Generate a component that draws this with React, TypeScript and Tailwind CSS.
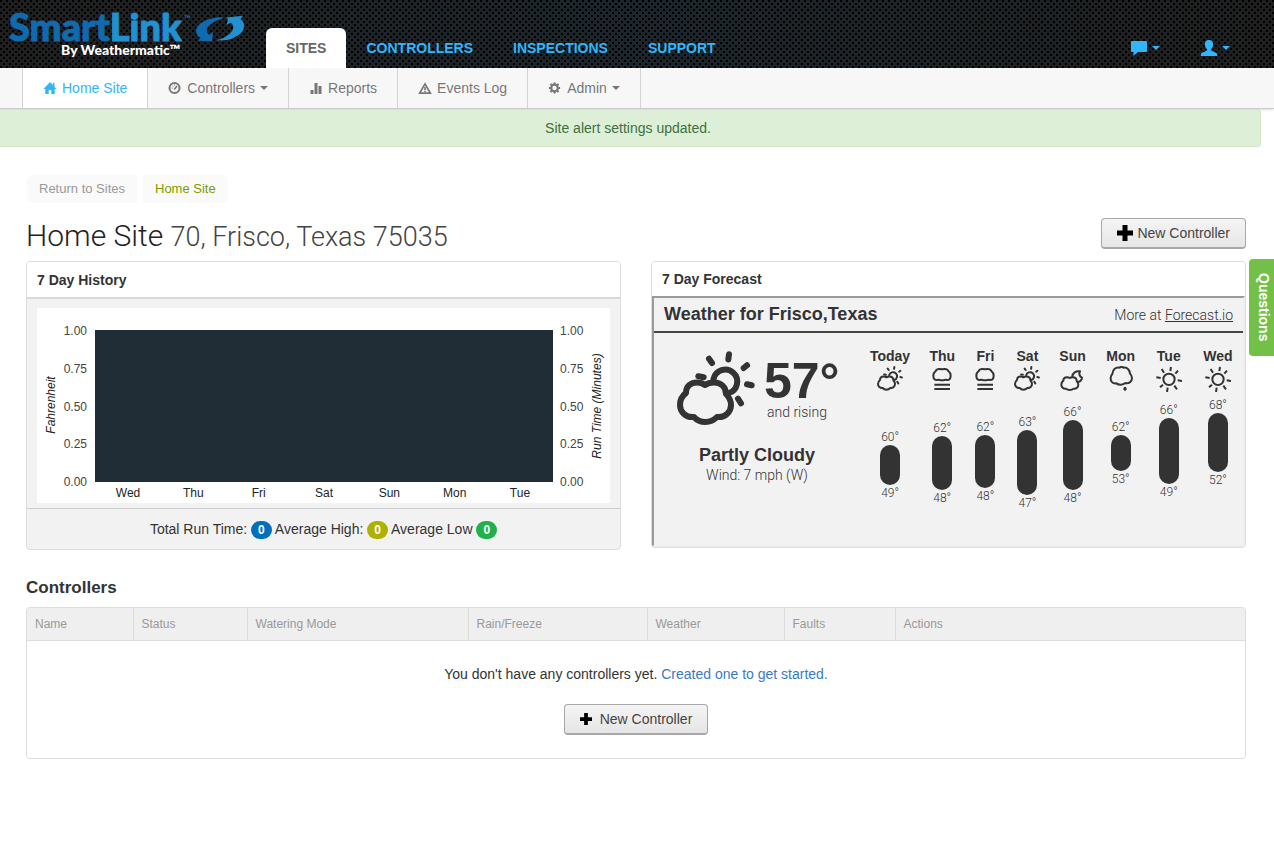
import { ReactNode } from "react";

type WeatherKind = "partly" | "fog" | "night" | "rain" | "clear";

interface ForecastDay {
  day: string;
  kind: WeatherKind;
  high: number;
  low: number;
  top: number;
  height: number;
}

const forecast: ForecastDay[] = [
  { day: "Today", kind: "partly", high: 60, low: 49, top: 32, height: 40 },
  { day: "Thu", kind: "fog", high: 62, low: 48, top: 23, height: 54 },
  { day: "Fri", kind: "fog", high: 62, low: 48, top: 22, height: 53 },
  { day: "Sat", kind: "partly", high: 63, low: 47, top: 17, height: 65 },
  { day: "Sun", kind: "night", high: 66, low: 48, top: 7, height: 70 },
  { day: "Mon", kind: "rain", high: 62, low: 53, top: 22, height: 36 },
  { day: "Tue", kind: "clear", high: 66, low: 49, top: 5, height: 66 },
  { day: "Wed", kind: "clear", high: 68, low: 52, top: 0, height: 59 },
];

const historyDays = ["Wed", "Thu", "Fri", "Sat", "Sun", "Mon", "Tue"];
const ticks = ["1.00", "0.75", "0.50", "0.25", "0.00"];

const columns = [
  { label: "Name", width: "w-[106px]" },
  { label: "Status", width: "w-[114px]" },
  { label: "Watering Mode", width: "w-[221px]" },
  { label: "Rain/Freeze", width: "w-[179px]" },
  { label: "Weather", width: "w-[137px]" },
  { label: "Faults", width: "w-[111px]" },
  { label: "Actions", width: "" },
];

function Logo() {
  return (
    <svg viewBox="0 0 246 68" className="h-[68px] w-[246px]" role="img" aria-label="SmartLink By Weathermatic">
      <g fontFamily="Lato, sans-serif" fontWeight="900" fontSize="38" strokeWidth="1" strokeLinejoin="round">
        <text x="9" y="41">
          <tspan fill="#106aad" stroke="#106aad">Smart</tspan>
          <tspan fill="#2191d0" stroke="#2191d0">Link</tspan>
        </text>
      </g>
      <text x="184" y="22" fontFamily="Lato, sans-serif" fontWeight="700" fontSize="9" fill="#106aad">
        ™
      </text>
      <text x="61" y="55" fontFamily="Lato, sans-serif" fontWeight="900" fontSize="14" fill="#fff">
        By Weathermatic™
      </text>
      <path
        d="M222.7 17.300C208 17 196 24 196 31c0 3 1.500 5.500 4.500 7L198 40.800l14 .7 1-9.500-3.500 2.800c-3.500-1.800-3.500-5.800-.5-9 3-3.300 8-6 13.700-7.300Z"
        fill="#106aad"
      />
      <path
        d="M226 17.500 243 15.700 240.500 19c4 3 5 8 1.800 12.500C237 38 227 41.500 216 40.300c8.500-1.800 15.500-6.300 17-11.300.8-3-.2-5-2.500-6.300L226.500 25l1.500-5.500Z"
        fill="#2191d0"
      />
    </svg>
  );
}

function Caret() {
  return (
    <svg viewBox="0 0 8 4" className="h-1 w-2" fill="currentColor" aria-hidden="true">
      <path d="M0 0h8L4 4Z" />
    </svg>
  );
}

function HomeIcon() {
  return (
    <svg viewBox="0 0 14 14" className="size-3.5" fill="currentColor" aria-hidden="true">
      <path d="M7 1 .5 8H2.300v5h3.400V9h2.600v4h3.400V8h1.800L11.500 5.800V2H9.800v2Z" />
    </svg>
  );
}

function GaugeIcon() {
  return (
    <svg viewBox="0 0 14 14" className="size-3.5" fill="none" stroke="currentColor" aria-hidden="true">
      <circle cx="6.500" cy="7" r="5" strokeWidth="2" />
      <path d="M6.200 8.600 9 5" strokeWidth="1.600" />
      <path d="M3.600 7h1M4.600 4.800l.7.6M6.500 3.600v1" strokeWidth="1" />
    </svg>
  );
}

function StatsIcon() {
  return (
    <svg viewBox="0 0 14 14" className="size-3.5" fill="currentColor" aria-hidden="true">
      <path d="M1.500 9h3v4h-3zM5.500 2h3v11h-3zM9.500 5h3v8h-3z" />
    </svg>
  );
}

function WarningIcon() {
  return (
    <svg viewBox="0 0 14 14" className="size-3.5" fill="currentColor" aria-hidden="true">
      <path
        fillRule="evenodd"
        d="M7 1.300 13.800 13H.2ZM7 4.500 3.200 11.300h7.600ZM6.200 6h1.600v3.200H6.200ZM6.200 9.900h1.600v1.200H6.200Z"
      />
    </svg>
  );
}

function CogIcon() {
  return (
    <svg viewBox="0 0 14 14" className="size-3.5" fill="none" stroke="currentColor" aria-hidden="true">
      <circle cx="6.500" cy="7" r="3.300" strokeWidth="2.200" />
      <path
        strokeWidth="2.200"
        d="M6.500 1.400v1.800M6.500 10.800v1.800M.9 7h1.800M10.300 7h1.800M2.500 3l1.300 1.300M9.200 9.700l1.300 1.300M10.500 3 9.200 4.300M3.800 9.700 2.500 11"
      />
    </svg>
  );
}

function CommentIcon() {
  return (
    <svg viewBox="0 0 18 16" className="h-4 w-[18px]" fill="currentColor" aria-hidden="true">
      <path d="M2 1h14q1 0 1 1v9q0 1-1 1H8l-4.500 4V12H2q-1 0-1-1V2q0-1 1-1Z" />
    </svg>
  );
}

function UserIcon() {
  return (
    <svg viewBox="0 0 18 18" className="size-[18px]" fill="currentColor" aria-hidden="true">
      <path d="M9 1c2.800 0 4.200 1.800 4.200 4.300 0 2-.9 3.800-2.200 5v1.200l5 2.300c1 .5 1.300 1.300 1.300 3.200H.7c0-1.900.3-2.700 1.300-3.200l5-2.300v-1.200C5.700 9.100 4.800 7.300 4.800 5.300 4.800 2.800 6.200 1 9 1Z" />
    </svg>
  );
}

function PlusIcon({ className }: { className: string }) {
  return (
    <svg viewBox="0 0 16 16" className={className} fill="#000" aria-hidden="true">
      <path d="M5.500 0h5v5.500H16v5h-5.500V16h-5v-5.500H0v-5h5.500Z" />
    </svg>
  );
}

function WeatherIcon({ kind, className }: { kind: WeatherKind; className: string }) {
  return (
    <svg
      viewBox="0 0 78 78"
      className={className}
      fill="none"
      stroke="#333"
      strokeWidth="6"
      strokeLinecap="round"
      strokeLinejoin="round"
      aria-hidden="true"
    >
      {kind === "partly" && (
        <>
          <path d="M17 66C9 67 3 61 3 54c0-5 2-9 6-12 0-7 5-10.500 11-10.500 3 0 6 1 8 2.500 2-1.500 5-2.500 9-2.500 7 0 12 4.500 12 11.500 3 3 5 6 5 11 0 7-6 13-14 12-3 3-7 5-11.500 5S20 69.500 17 66Z" />
          <path d="M36.500 28A12 12 0 1 1 52 42" />
          <path d="M52 3.300 51.300 8.500M32 7.700l3 4.300M66.700 17l3.300-2.700M70 33.300l4.700 1M61 47.700l3 4.600M21.300 25.300l5.400 1" />
        </>
      )}
      {kind === "fog" && (
        <>
          <path d="M24 42c-7 0-11-6-11-13 0-6 3-11 7-14 3-7 11-7 19-5 8-2 16-2 19 5 4 3 7 8 7 14 0 7-4 13-11 13-4-2-6-1-8 0-4 1-10 1-14 0-2-1-5-1-8 0Z" />
          <path d="M16 56h47M16 69h47" strokeLinecap="butt" />
        </>
      )}
      {kind === "night" && (
        <>
          <path d="M18 68C10 69 4 63 4 56c0-5 2-9 6-12 0-7 5-10.500 11-10.500 3 0 6 1 8 2.500 2-1.500 5-2.500 9-2.500 7 0 12 4.500 12 11.500 3 3 5 6 5 11 0 7-6 13-14 12-3 3-7 4-11.500 4S21 71.500 18 68Z" />
          <path d="M37 31c1-10 10-17 23-15-4 7-2 15 6 19-1 8-5 12-12 13" />
        </>
      )}
      {kind === "rain" && (
        <>
          <path d="M25 52C14 54 7 46 8 36c0-5 2-9 5-12C14 10 24 3 34 5c5-3 10-2 13 0 10-2 18 6 19 18 4 4 6 8 6 13 0 10-9 18-20 15-7 6-19 7-27 1Z" />
          <path d="M51 67v3" strokeWidth="9" />
        </>
      )}
      {kind === "clear" && (
        <>
          <circle cx="39" cy="40" r="17" />
          <path
            strokeLinecap="butt"
            d="M43 15l2-12M58 23l8-9M65 43l13 2M55 59l8 11M35 65l-2 13M21 56l-9 8M14 36 1 34M24 20l-7-11"
          />
        </>
      )}
    </svg>
  );
}

function NavTab({ active = false, children }: { active?: boolean; children: ReactNode }) {
  return (
    <a
      href="#"
      className={`flex h-10 items-center px-5 text-sm font-bold ${
        active ? "rounded-t-md bg-white text-[#666]" : "text-[#33b5fc]"
      }`}
    >
      {children}
    </a>
  );
}

function SubTab({ active = false, icon, caret = false, children }: {
  active?: boolean;
  icon: ReactNode;
  caret?: boolean;
  children: ReactNode;
}) {
  return (
    <a
      href="#"
      className={`flex items-center gap-[5px] border-r border-[#d4d4d4] px-5 text-sm ${
        active ? "bg-white text-[#33b5fc]" : "text-[#777]"
      }`}
    >
      {icon}
      <span>{children}</span>
      {caret && <Caret />}
    </a>
  );
}

function NewControllerButton({ plus }: { plus: string }) {
  return (
    <button
      type="button"
      className="flex h-[31px] items-center justify-center gap-1 rounded-sm border border-b-2 border-[#a8a8a8] bg-linear-to-b from-[#f4f4f4] to-[#e6e6e6] px-[15px] text-sm text-[#444]"
    >
      <PlusIcon className={plus} />
      New Controller
    </button>
  );
}

function Badge({ color }: { color: string }) {
  return (
    <span className={`inline-block h-[18px] rounded-full px-[7px] text-xs leading-[18px] font-bold text-white ${color}`}>0</span>
  );
}

function HistoryChart() {
  return (
    <svg viewBox="0 0 573 195" className="block w-full bg-white" fontFamily="Liberation Sans, Arial, sans-serif" fontSize="12">
      <rect x="58" y="22" width="458" height="152" fill="#202c36" />
      {ticks.map((tick, i) => (
        <g key={tick} fill="#444">
          <text x="50" y={27 + i * 37.75} textAnchor="end">{tick}</text>
          <text x="523" y={27 + i * 37.75}>{tick}</text>
        </g>
      ))}
      {historyDays.map((day, i) => (
        <text key={day} x={91 + i * 65.33} y="189" textAnchor="middle" fill="#222">{day}</text>
      ))}
      <g fontStyle="italic" fill="#222" textAnchor="middle">
        <text transform="translate(18 97) rotate(-90)">Fahrenheit</text>
        <text transform="translate(564 98) rotate(-90)">Run Time (Minutes)</text>
      </g>
    </svg>
  );
}

function ForecastPanel() {
  return (
    <section className="overflow-hidden rounded border border-[#ddd] bg-[#f2f2f2]">
      <h2 className="bg-white px-2.5 py-2 text-sm leading-[18px] font-bold text-[#333]">7 Day Forecast</h2>
      <div className="h-[251px] border-2 border-t-[#9a9a9a] border-r-[#eee] border-b-[#eee] border-l-[#9a9a9a] text-[#333]">
        <div className="flex h-[35px] items-center justify-between border-b-2 border-[#444] px-2.5">
          <h3 className="pb-0.5 text-lg leading-6 font-bold">Weather for Frisco,Texas</h3>
          <p className="font-[Roboto,sans-serif] text-sm font-light">
            More at <a href="#" className="underline">Forecast.io</a>
          </p>
        </div>
        <div className="flex">
          <div className="w-[206px] pt-[18px]">
            <div className="flex pl-[23px]">
              <WeatherIcon kind="partly" className="size-[78px]" />
              <div className="pt-[7px] pl-[9px]">
                <p className="text-[50px] leading-[46px] font-bold">57°</p>
                <p className="pl-[3px] font-[Roboto,sans-serif] text-sm leading-4 font-light">and rising</p>
              </div>
            </div>
            <p className="pt-3.5 text-center text-lg leading-6 font-bold">Partly Cloudy</p>
            <p className="text-center font-[Roboto,sans-serif] text-sm leading-4 font-light">Wind: 7 mph (W)</p>
          </div>
          <ul className="grid flex-1 grid-cols-[60fr_44fr_42fr_42fr_48fr_48fr_48fr_50fr] pt-3.5">
            {forecast.map((item) => (
              <li key={item.day} className="flex flex-col items-center">
                <span className="text-sm leading-[18px] font-bold">{item.day}</span>
                <WeatherIcon kind={item.kind} className="mt-px size-[26px]" />
                <div className="flex flex-col items-center font-[Roboto,sans-serif] text-xs leading-4 font-light" style={{ paddingTop: item.top + 5 }}>
                  <span>{item.high}°</span>
                  <span className="w-5 rounded-full bg-[#333]" style={{ height: item.height }} />
                  <span>{item.low}°</span>
                </div>
              </li>
            ))}
          </ul>
        </div>
      </div>
    </section>
  );
}

export default function App() {
  return (
    <div className="min-h-screen bg-white font-['Liberation_Sans',Arial,sans-serif] text-sm text-[#333]">
      <header className="bg-[url('data:image/svg+xml;utf8,%3Csvg%20xmlns=%22http://www.w3.org/2000/svg%22%20width=%226%22%20height=%226%22%3E%3Cpath%20d=%22M0%200h2v2H0zM3%203h2v2H3z%22/%3E%3C/svg%3E'),linear-gradient(to_right,#1f1f1f,#1c262c,#1f1f1f)]">
        <div className="flex h-[68px] items-end justify-between pr-6">
          <div className="flex items-end">
            <a href="#" className="mr-5">
              <Logo />
            </a>
            <nav className="flex">
              <NavTab active>SITES</NavTab>
              <NavTab>CONTROLLERS</NavTab>
              <NavTab>INSPECTIONS</NavTab>
              <NavTab>SUPPORT</NavTab>
            </nav>
          </div>
          <div className="flex text-[#33b5fc]">
            <button type="button" aria-label="Messages" className="flex h-10 items-center gap-1 px-5">
              <CommentIcon />
              <Caret />
            </button>
            <button type="button" aria-label="Account" className="flex h-10 items-center gap-1 px-5">
              <UserIcon />
              <Caret />
            </button>
          </div>
        </div>
      </header>

      <nav className="flex h-[41px] border-b border-[#ccc] bg-[#f7f7f7] pl-[22px] shadow-sm">
        <div className="flex border-l border-[#d4d4d4]">
          <SubTab active icon={<HomeIcon />}>Home Site</SubTab>
          <SubTab icon={<GaugeIcon />} caret>Controllers</SubTab>
          <SubTab icon={<StatsIcon />}>Reports</SubTab>
          <SubTab icon={<WarningIcon />}>Events Log</SubTab>
          <SubTab icon={<CogIcon />} caret>Admin</SubTab>
        </div>
      </nav>

      <div role="status" className="mr-[13px] rounded-r border border-l-0 border-[#d0e6c4] bg-[#ddefd7] py-2 pr-5 pl-4 text-center leading-5 text-[#3f6f40]">
        Site alert settings updated.
      </div>

      <main className="pt-7 pr-7 pl-[26px]">
        <nav className="flex gap-1.5 pl-px text-[13px] leading-7">
          <a href="#" className="rounded-l-md bg-[#fafafa] px-3 text-[#999]">Return to Sites</a>
          <a href="#" className="rounded-r-md bg-[#fafafa] px-3 text-[#7a9c00]">Home Site</a>
        </nav>

        <div className="mt-[15px] mb-3 flex h-[31px] items-start justify-between">
          <h1 className="font-[Roboto,sans-serif] text-[30px] leading-9 font-light text-[#222]">
            Home Site <small className="text-[27px] text-[#444]">70, Frisco, Texas 75035</small>
          </h1>
          <NewControllerButton plus="size-4" />
        </div>

        <div className="grid grid-cols-2 items-start gap-[30px]">
          <section className="overflow-hidden rounded border border-[#ddd] bg-[#f2f2f2]">
            <h2 className="border-b-2 border-[#d9d9d9] bg-white px-2.5 pt-[9px] pb-2 text-sm leading-[18px] font-bold text-[#333]">
              7 Day History
            </h2>
            <div className="px-2.5 pt-[9px] pb-[5px]">
              <HistoryChart />
            </div>
            <p className="border-t border-[#ccc] py-2.5 text-center leading-5">
              Total Run Time: <Badge color="bg-[#0070bb]" /> Average High: <Badge color="bg-[#b0b000]" /> Average Low{" "}
              <Badge color="bg-[#22b04b]" />
            </p>
          </section>
          <ForecastPanel />
        </div>

        <h2 className="mt-7 text-[17px] leading-5 font-bold">Controllers</h2>
        <div className="mt-[9px] overflow-hidden rounded border border-[#ddd]">
          <table className="w-full table-fixed border-collapse">
            <thead>
              <tr className="bg-[#efefef]">
                {columns.map((col) => (
                  <th
                    key={col.label}
                    scope="col"
                    className={`h-8 border-r border-b border-[#ddd] px-2 text-left text-xs font-normal text-[#999] last:border-r-0 ${col.width}`}
                  >
                    {col.label}
                  </th>
                ))}
              </tr>
            </thead>
            <tbody>
              <tr>
                <td colSpan={columns.length} className="h-[118px]">
                  <div className="flex flex-col items-center gap-5">
                    <p className="leading-5">
                      You don't have any controllers yet.{" "}
                      <a href="#" className="text-[#3a7bbf]">Created one to get started.</a>
                    </p>
                    <NewControllerButton plus="mr-1 size-3" />
                  </div>
                </td>
              </tr>
            </tbody>
          </table>
        </div>
      </main>

      <button
        type="button"
        className="fixed top-[259px] right-0 flex h-[97px] w-[25px] items-center justify-center rounded-l-sm bg-[#73c048] pl-1 text-sm font-bold text-white [writing-mode:vertical-rl]"
      >
        Questions
      </button>
    </div>
  );
}
